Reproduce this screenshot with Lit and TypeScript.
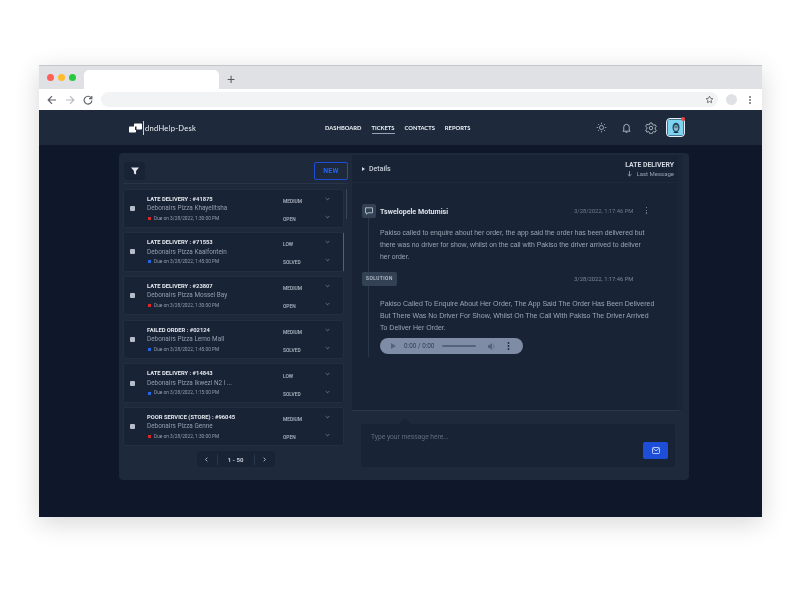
import { LitElement, html, css, svg } from 'lit';
import { customElement } from 'lit/decorators.js';

interface Ticket {
  title: string;
  store: string;
  due: string;
  late: boolean;
  priority: string;
  status: string;
  active?: boolean;
}

const tickets: Ticket[] = [
  { title: 'LATE DELIVERY : #41875', store: 'Debonairs Pizza Khayelitsha', due: 'Due on 3/28/2022, 1:30:00 PM', late: true, priority: 'MEDIUM', status: 'OPEN' },
  { title: 'LATE DELIVERY : #71553', store: 'Debonairs Pizza Kaalfontein', due: 'Due on 3/28/2022, 1:45:00 PM', late: false, priority: 'LOW', status: 'SOLVED', active: true },
  { title: 'LATE DELIVERY : #23807', store: 'Debonairs Pizza Mossel Bay', due: 'Due on 3/28/2022, 1:30:00 PM', late: true, priority: 'MEDIUM', status: 'OPEN' },
  { title: 'FAILED ORDER : #02124', store: 'Debonairs Pizza Lemo Mall', due: 'Due on 3/28/2022, 1:45:00 PM', late: false, priority: 'MEDIUM', status: 'SOLVED' },
  { title: 'LATE DELIVERY : #14843', store: 'Debonairs Pizza Ikwezi N2 I ...', due: 'Due on 3/28/2022, 1:15:00 PM', late: false, priority: 'LOW', status: 'SOLVED' },
  { title: 'POOR SERVICE (STORE) : #96045', store: 'Debonairs Pizza Genne', due: 'Due on 3/28/2022, 1:30:00 PM', late: true, priority: 'MEDIUM', status: 'OPEN' },
];

const chevron = svg`<svg width="5" height="4" viewBox="0 0 6 4" fill="none" stroke="#8b95a5" stroke-width=".8"><path d="M.8.8 3 3l2.2-2.2"/></svg>`;

@customElement('app-root')
export class AppRoot extends LitElement {
  static styles = css`
    :host {
      display: block;
      width: 800px;
      height: 600px;
      background: #fff;
      font-family: Roboto, "Liberation Sans", sans-serif;
      padding: 65px 38px 0 39px;
      box-sizing: border-box;
      overflow: hidden;
    }
    .window {
      height: 452px;
      display: flex;
      flex-direction: column;
      box-shadow: 0 6px 24px rgba(0, 0, 0, .16);
      border-top: 1px solid #c4c6c9;
      box-sizing: border-box;
      filter: blur(.3px);
    }
    .tabstrip {
      height: 23px;
      background: #dfe1e5;
      display: flex;
      align-items: flex-end;
      flex: none;
    }
    .lights { display: flex; gap: 4px; padding: 0 8px 0 8px; align-self: flex-start; margin-top: 8px; }
    .lights i { width: 7px; height: 7px; border-radius: 50%; }
    .tab { width: 135px; height: 19px; background: #fff; border-radius: 5px 5px 0 0; }
    .plus { color: #55585c; font: 14px/1 "Liberation Sans", sans-serif; margin: 0 0 3px 8px; }
    .toolbar {
      height: 21px;
      background: #fff;
      flex: none;
      display: flex;
      align-items: center;
      padding-left: 8px;
      gap: 8px;
    }
    .address {
      width: 617px;
      height: 15px;
      border-radius: 8px;
      background: #f1f3f4;
      display: flex;
      justify-content: flex-end;
      align-items: center;
      padding-right: 4px;
      box-sizing: border-box;
    }
    .profile { width: 11px; height: 11px; border-radius: 50%; background: #dfe1e5; }
    .app { flex: 1; background: #0f172a; display: flex; flex-direction: column; min-height: 0; }
    header {
      height: 35px;
      flex: none;
      background: #1e293b;
      display: flex;
      align-items: center;
      padding-left: 90px;
      box-sizing: border-box;
    }
    .logo { display: flex; align-items: center; width: 196px; color: #eef1f5; font: 400 7.6px Lato, sans-serif; letter-spacing: .25px; }
    .logo b { width: 1px; height: 14px; background: #cbd5e1; margin: 0 1px 0 1px; }
    nav { display: flex; gap: 10px; }
    nav a { color: #edf1f6; font: 700 5.8px Lato, sans-serif; padding: 2px 0; border-bottom: 1px solid transparent; }
    nav a.on { border-bottom-color: #94a3b8; }
    .tools { margin-left: auto; margin-right: 77px; display: flex; align-items: center; gap: 13px; }
    .tools .sun { margin-right: 1px; }
    .avatar {
      width: 19px; height: 19px; border-radius: 4px; background: #7dd3f0; box-sizing: border-box;
      border: 1px solid #e8eef4; box-shadow: 0 0 0 .5px #0e182b inset;
      display: flex; align-items: center; justify-content: center; position: relative; margin-left: -4px;
    }
    .avatar::after {
      content: ""; position: absolute; top: -2px; right: -1px; width: 4px; height: 4px;
      border-radius: 50%; background: #ef4444;
    }
    main {
      width: 570px;
      height: 327px;
      margin: 8px 0 0 80px;
      background: #1e293b;
      border-radius: 4px;
      display: flex;
      flex: none;
    }
    .list { width: 232px; flex: none; display: flex; flex-direction: column; padding: 9px 3px 0 4px; box-sizing: border-box; }
    .list-top {
      display: flex; justify-content: space-between; align-items: flex-start; box-sizing: border-box;
      height: 21.5px; border-bottom: 1px solid #283447; flex: none; margin-bottom: 5px;
    }
    .filter { width: 21px; height: 18px; background: #192336; border-radius: 4px; display: flex; align-items: center; justify-content: center; margin-left: 1px; }
    .new {
      width: 34px; height: 18px; border: 1px solid #1d4ed8; border-radius: 2px; box-sizing: border-box;
      color: #2563eb; font: 700 6.8px/16px Roboto, sans-serif; text-align: center; letter-spacing: .3px;
    }
    .cards { display: flex; flex-direction: column; gap: 4.2px; position: relative; }
    .card {
      height: 39.5px; background: #192336; border: 1px solid #232e41; border-radius: 2px; box-sizing: border-box;
      display: flex; align-items: center; width: 221px;
    }
    .card.active { border-right: 1px solid #2563eb; }
    .check { width: 5px; height: 5px; background: #b6bdc9; border-radius: 1px; margin: 0 12px 0 6px; flex: none; }
    .info { width: 136px; flex: none; margin-top: 1px; }
    .title { color: #e4e8ee; font-size: 5.8px; font-weight: 700; line-height: 9.5px; white-space: nowrap; }
    .store { color: #949eae; font-size: 6.4px; line-height: 9.5px; white-space: nowrap; }
    .due { color: #949eae; font-size: 4.8px; line-height: 9.5px; display: flex; align-items: center; gap: 3px; white-space: nowrap; margin-left: 1px; }
    .due i { width: 3px; height: 3px; flex: none; background: #2563eb; }
    .due i.late { background: #dc2626; }
    .meta { display: grid; grid-template-columns: 41.5px 8px; row-gap: 12px; align-items: center; color: #b4bcc8; font-size: 4.9px; font-weight: 500; margin-top: 3px; }
    .meta svg { display: block; margin-top: -4px; }
    .scroll { position: absolute; left: 223px; top: 0; width: 1px; height: 30px; background: #3a4659; }
    .pager {
      align-self: center; margin-top: 5px; height: 15.5px; width: 78px; background: #192336; border-radius: 4px;
      display: flex; align-items: center; color: #c6ccd6; font: 700 6px Roboto, sans-serif; box-sizing: border-box;
    }
    .pager span { flex: 1; text-align: center; height: 11px; line-height: 11px; }
    .pager .mid { flex: 1.8; border-left: 1px solid #2a3649; border-right: 1px solid #2a3649; }
    .detail { flex: 1; display: flex; flex-direction: column; padding: 2px 6px 0 1px; min-width: 0; }
    .thread {
      height: 256px; flex: none; background: #192336; border-bottom: 1px solid #2a3649; border-right: 5px solid #1b2639;
      display: flex; flex-direction: column; box-sizing: border-box;
    }
    .thread-top {
      height: 28px; flex: none; display: flex; align-items: center; justify-content: space-between;
      padding: 0 4px 0 10px; border-bottom: 1px solid #1e293b; box-sizing: border-box;
    }
    .details { color: #c9d0d9; font-size: 7px; font-weight: 500; display: flex; align-items: center; gap: 4px; margin-top: 1px; }
    .details::before { content: ""; border-left: 3.5px solid #d5dae2; border-top: 2px solid transparent; border-bottom: 2px solid transparent; }
    .late-info { text-align: right; margin-top: 2px; }
    .late-info div { color: #d2d8e0; font-size: 6.9px; font-weight: 700; line-height: 8.5px; }
    .late-info small { color: #96a0b0; font-size: 6px; display: flex; justify-content: flex-end; align-items: center; gap: 5px; line-height: 8.5px; }
    .body { padding: 21px 0 0 10px; position: relative; }
    .line { position: absolute; left: 16px; top: 35px; width: 1px; height: 139px; background: #2a3649; }
    .msg-head { display: flex; align-items: center; height: 14px; position: relative; }
    .badge { width: 14px; height: 14px; background: #334155; border-radius: 2px; display: flex; align-items: center; justify-content: center; }
    .name { color: #dfe3e9; font-size: 7.1px; font-weight: 700; margin-left: 4px; }
    .time { color: #6f7a8b; font-size: 5.8px; position: absolute; left: 212px; white-space: nowrap; }
    .dots { position: absolute; left: 284px; top: 3px; display: flex; flex-direction: column; gap: 1.5px; }
    .dots i { width: 1.2px; height: 1.2px; background: #6f7a8b; }
    .text { color: #9ca5b3; font: 6.9px/12px "Liberation Sans", sans-serif; margin: 9px 0 0 18px; width: 270px; }
    .solution { height: 14px; margin-top: 9px; position: relative; display: flex; align-items: center; }
    .solution b { background: #334155; color: #c3cad4; font-size: 4.8px; font-weight: 500; letter-spacing: .5px; line-height: 14px; padding: 0 4px; border-radius: 2px; }
    .solution .time { color: #7c8798; }
    .text.caps { margin-top: 12px; width: 276px; font-size: 7px; }
    .audio {
      margin: 4px 0 0 18px; width: 143px; height: 16px; border-radius: 8px; background: #7e8da5;
      display: flex; align-items: center; padding-left: 11px; box-sizing: border-box; color: #334155; font-size: 6.4px; gap: 8px;
    }
    .track { width: 34px; height: 1.5px; background: #55647b; border-radius: 1px; }
    .composer-wrap { flex: 1; padding: 13px 8px 0 9px; position: relative; }
    .composer-wrap::before {
      content: ""; position: absolute; left: 47px; top: 7px;
      border: 6px solid transparent; border-top: 0; border-bottom-color: #192336;
    }
    .composer {
      height: 43px; background: #192336; border-radius: 3px; position: relative;
      color: #616c7d; font-size: 6.7px; padding: 9px 0 0 10px; box-sizing: border-box;
    }
    .send {
      position: absolute; right: 7px; bottom: 8px; width: 25px; height: 17px; border-radius: 2px; background: #1d4ed8;
      display: flex; align-items: center; justify-content: center;
    }
  `;

  renderCard(t: Ticket) {
    return html`
      <div class="card ${t.active ? 'active' : ''}">
        <div class="check"></div>
        <div class="info">
          <div class="title">${t.title}</div>
          <div class="store">${t.store}</div>
          <div class="due"><i class="${t.late ? 'late' : ''}"></i>${t.due}</div>
        </div>
        <div class="meta">
          <span>${t.priority}</span>${chevron}
          <span>${t.status}</span>${chevron}
        </div>
      </div>
    `;
  }

  render() {
    return html`
      <div class="window">
        <div class="tabstrip">
          <div class="lights">
            <i style="background:#ff5f57"></i><i style="background:#febc2e"></i><i style="background:#28c840"></i>
          </div>
          <div class="tab"></div>
          <div class="plus">+</div>
        </div>
        <div class="toolbar">
          <svg width="10" height="10" viewBox="0 0 10 10" fill="none" stroke="#5f6368" stroke-width="1.2"><path d="M9 5H1.5M5 1.2 1.2 5 5 8.8"/></svg>
          <svg width="10" height="10" viewBox="0 0 10 10" fill="none" stroke="#b8bbbf" stroke-width="1.2"><path d="M1 5h7.500M5 1.200 8.800 5 5 8.800"/></svg>
          <svg width="10" height="10" viewBox="0 0 10 10" fill="none" stroke="#5f6368" stroke-width="1.200"><path d="M8.400 3.200A3.900 3.900 0 1 0 8.900 5.500"/><path d="M8.800.9v2.800H6" /></svg>
          <div class="address">
            <svg width="9" height="9" viewBox="0 0 24 24" fill="none" stroke="#5f6368" stroke-width="2.200"><path d="m12 3 2.800 5.900 6.400.8-4.700 4.400 1.200 6.400-5.700-3.100-5.700 3.100 1.200-6.400L2.800 9.700l6.400-.8z"/></svg>
          </div>
          <div class="profile"></div>
          <svg width="10" height="10" viewBox="0 0 10 10" fill="#5f6368"><circle cx="5" cy="2" r=".9"/><circle cx="5" cy="5" r=".9"/><circle cx="5" cy="8" r=".9"/></svg>
        </div>
        <div class="app">
          <header>
            <div class="logo">
              <svg width="13" height="10" viewBox="0 0 13 10" fill="#fff"><rect x="0" y="3.500" width="7" height="6" rx=".8"/><rect x="5" y="0.500" width="8" height="6" rx=".8"/><path d="M6 3.500h1.500V7H6z" fill="#1e293b"/></svg>
              <b></b>dndHelp-Desk
            </div>
            <nav>
              <a>DASHBOARD</a><a class="on">TICKETS</a><a>CONTACTS</a><a>REPORTS</a>
            </nav>
            <div class="tools">
              <svg class="sun" width="11" height="11" viewBox="0 0 24 24" fill="none" stroke="#d5dae2" stroke-width="1.500"><circle cx="12" cy="12" r="4.500"/><path d="M12 1.500v3M12 19.500v3M1.500 12h3M19.500 12h3M4.600 4.600l2.100 2.100M17.300 17.300l2.100 2.100M4.600 19.400l2.100-2.100M17.300 6.700l2.100-2.100"/></svg>
              <svg width="11" height="12" viewBox="0 0 24 24" fill="none" stroke="#d5dae2" stroke-width="1.600"><path d="M6 17V10a6 6 0 0 1 12 0v7l2 2H4zM10 21.500h4"/></svg>
              <svg width="12" height="12" viewBox="0 0 24 24" fill="none" stroke="#d5dae2" stroke-width="1.500"><circle cx="12" cy="12" r="3.500"/><path d="M9.800 2h4.400l.7 3 2.500 1.400 3-.9 2.200 3.800-2.300 2.100v2.900l2.300 2.100-2.200 3.800-3-.9-2.500 1.400-.7 3H9.800l-.7-3-2.500-1.400-3 .9L1.400 15.900l2.300-2.100v-2.900L1.400 8.300l2.200-3.800 3 .9L9.100 5z"/></svg>
              <div class="avatar">
                <svg width="8" height="12" viewBox="0 0 8 12"><ellipse cx="4" cy="5.500" rx="3.500" ry="4.800" fill="#1e4a66"/><ellipse cx="4" cy="6" rx="2.200" ry="3" fill="#8fb6c9"/><path d="M2.500 5h3" stroke="#12283a" stroke-width=".8"/><path d="M1 11c.8-1.500 5.200-1.500 6 0z" fill="#12283a"/></svg>
              </div>
            </div>
          </header>
          <main>
            <section class="list">
              <div class="list-top">
                <div class="filter">
                  <svg width="8" height="8" viewBox="0 0 9 8" fill="#e2e6ec"><path d="M0 0h9L5.700 4v4L3.300 6.800V4z"/></svg>
                </div>
                <div class="new">NEW</div>
              </div>
              <div class="cards">
                ${tickets.map((t) => this.renderCard(t))}
                <div class="scroll"></div>
              </div>
              <div class="pager">
                <span>
                  <svg width="5" height="5" viewBox="0 0 6 6" fill="none" stroke="#c6ccd6"><path d="M4 .8 1.800 3 4 5.200"/></svg>
                </span>
                <span class="mid">1 - 50</span>
                <span>
                  <svg width="5" height="5" viewBox="0 0 6 6" fill="none" stroke="#c6ccd6"><path d="M2 .8 4.200 3 2 5.200"/></svg>
                </span>
              </div>
            </section>
            <section class="detail">
              <div class="thread">
                <div class="thread-top">
                  <div class="details">Details</div>
                  <div class="late-info">
                    <div>LATE DELIVERY</div>
                    <small>
                      <svg width="5" height="6" viewBox="0 0 6 7" fill="none" stroke="#aab2bf" stroke-width=".9"><path d="M3 0v6M.8 3.800 3 6l2.200-2.200"/></svg>
                      Last Message
                    </small>
                  </div>
                </div>
                <div class="body">
                  <div class="line"></div>
                  <div class="msg-head">
                    <div class="badge">
                      <svg width="8" height="8" viewBox="0 0 8 8" fill="none" stroke="#cbd2dc" stroke-width=".8"><path d="M.5.800h7v5H3L1.500 7.200V5.800h-1z"/></svg>
                    </div>
                    <span class="name">Tswelopele Motumisi</span>
                    <span class="time">3/28/2022, 1:17:46 PM</span>
                    <span class="dots"><i></i><i></i><i></i></span>
                  </div>
                  <div class="text">
                    Pakiso called to enquire about her order, the app said the order has been delivered but there was no driver for show, whilst on the call with Pakiso the driver arrived to deliver her order.
                  </div>
                  <div class="solution">
                    <b>SOLUTION</b>
                    <span class="time">3/28/2022, 1:17:46 PM</span>
                  </div>
                  <div class="text caps">
                    Pakiso Called To Enquire About Her Order, The App Said The Order Has Been Delivered But There Was No Driver For Show, Whilst On The Call With Pakiso The Driver Arrived To Deliver Her Order.
                  </div>
                  <div class="audio">
                    <svg width="5" height="6" viewBox="0 0 5 6" fill="#55647b"><path d="M0 0l5 3-5 3z"/></svg>
                    <span>0:00 / 0:00</span>
                    <div class="track"></div>
                    <svg width="8" height="7" viewBox="0 0 8 7" fill="#55647b" style="margin-left:4px"><path d="M0 2h1.500L4 0v7L1.500 5H0z"/><path d="M5 1.500a2.500 2.500 0 0 1 0 4" fill="none" stroke="#55647b" stroke-width=".8"/></svg>
                    <svg width="3" height="8" viewBox="0 0 3 8" fill="#1e293b" style="margin-left:3px"><circle cx="1.500" cy="1" r=".9"/><circle cx="1.500" cy="4" r=".9"/><circle cx="1.500" cy="7" r=".9"/></svg>
                  </div>
                </div>
              </div>
              <div class="composer-wrap">
                <div class="composer">
                  Type your message here...
                  <div class="send">
                    <svg width="8" height="7" viewBox="0 0 8 7" fill="none" stroke="#c7d2fe" stroke-width=".9"><rect x=".5" y=".5" width="7" height="6" rx=".8"/><path d="m.8 1.200 3.200 2.600 3.200-2.600"/></svg>
                  </div>
                </div>
              </div>
            </section>
          </main>
        </div>
      </div>
    `;
  }
}
